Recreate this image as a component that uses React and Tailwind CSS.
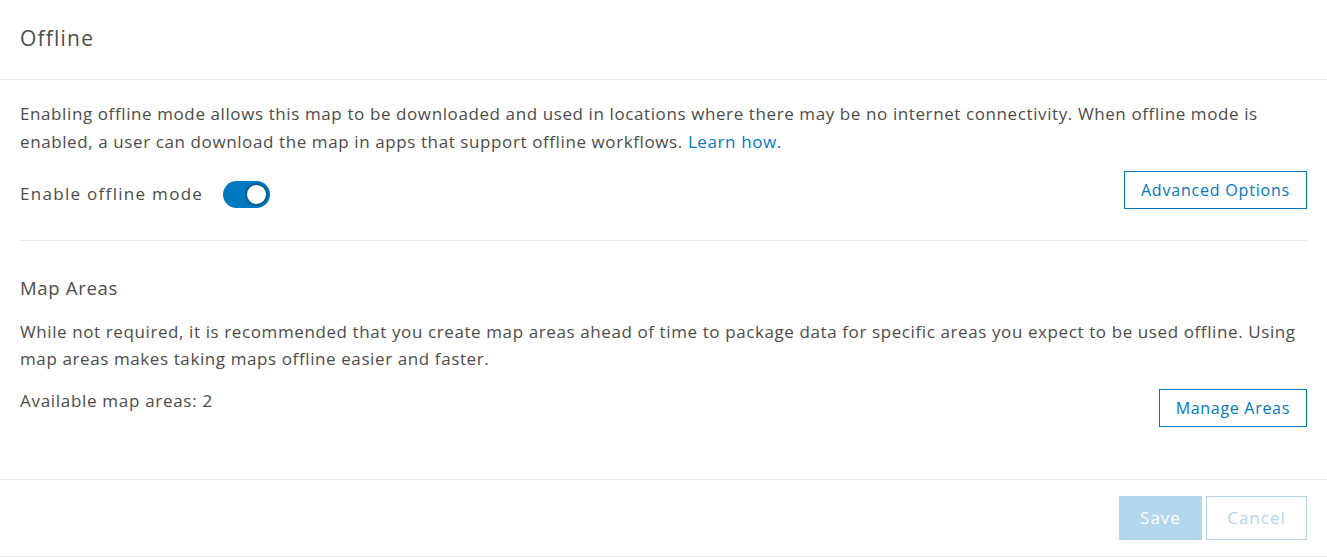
export default function App() {
  return (
    <div className="w-[1327px] h-[557px] bg-white text-[#4c4c4c] overflow-hidden" style={{ fontFamily: '"Open Sans", Lato, sans-serif' }}>
      <div className="h-[80px] border-b border-[#eaeaea] px-5 flex items-center">
        <h1 className="text-[21px] font-normal pb-[2px] tracking-[1.2px]">Offline</h1>
      </div>

      <div className="px-5 pt-[20px]">
        <p className="text-[17px] leading-[28px] tracking-[0.6px]">
          Enabling offline mode allows this map to be downloaded and used in locations where there may be no internet connectivity. When offline mode is enabled, a user can download the map in apps that support offline workflows.{' '}
          <a className="text-[#0079c1]">Learn how.</a>
        </p>

        <div className="flex items-center justify-between mt-[15px] pb-[31px] border-b border-[#eaeaea]">
          <div className="flex items-center gap-5 pt-[8px]">
            <span className="text-[17px] tracking-[1.3px]">Enable offline mode</span>
            <div className="relative w-[47px] h-[27px] rounded-full bg-[#0079c1]">
              <div className="absolute right-[2px] top-[2px] w-[23px] h-[23px] rounded-full bg-white border-[2px] border-[#005e95]" />
            </div>
          </div>
          <button className="h-[38px] px-4 border border-[#0079c1] text-[#0079c1] text-[16px] tracking-[0.8px]">Advanced Options</button>
        </div>

        <h2 className="text-[18.5px] mt-[33px] tracking-[0.7px]">Map Areas</h2>
        <p className="text-[17px] leading-[27px] mt-[16px] tracking-[0.6px]">
          While not required, it is recommended that you create map areas ahead of time to package data for specific areas you expect to be used offline. Using map areas makes taking maps offline easier and faster.
        </p>
        <div className="flex justify-between items-start mt-[16px]">
          <span className="text-[17px] tracking-[0.7px]">Available map areas: 2</span>
          <button className="h-[38px] px-4 border border-[#0079c1] text-[#0079c1] text-[16px] tracking-[0.7px] mt-[1px]">Manage Areas</button>
        </div>
      </div>

      <div className="mt-[52px] border-t border-[#eaeaea] h-[78px] px-5 flex items-center justify-end gap-1 border-b">
        <button className="w-[83px] h-[44px] bg-[#b3d7ed] text-white text-[17px] tracking-[1px]">Save</button>
        <button className="w-[101px] h-[44px] border border-[#b3d7ed] text-[#b3d7ed] text-[17px] tracking-[1px]">Cancel</button>
      </div>
    </div>
  );
}
